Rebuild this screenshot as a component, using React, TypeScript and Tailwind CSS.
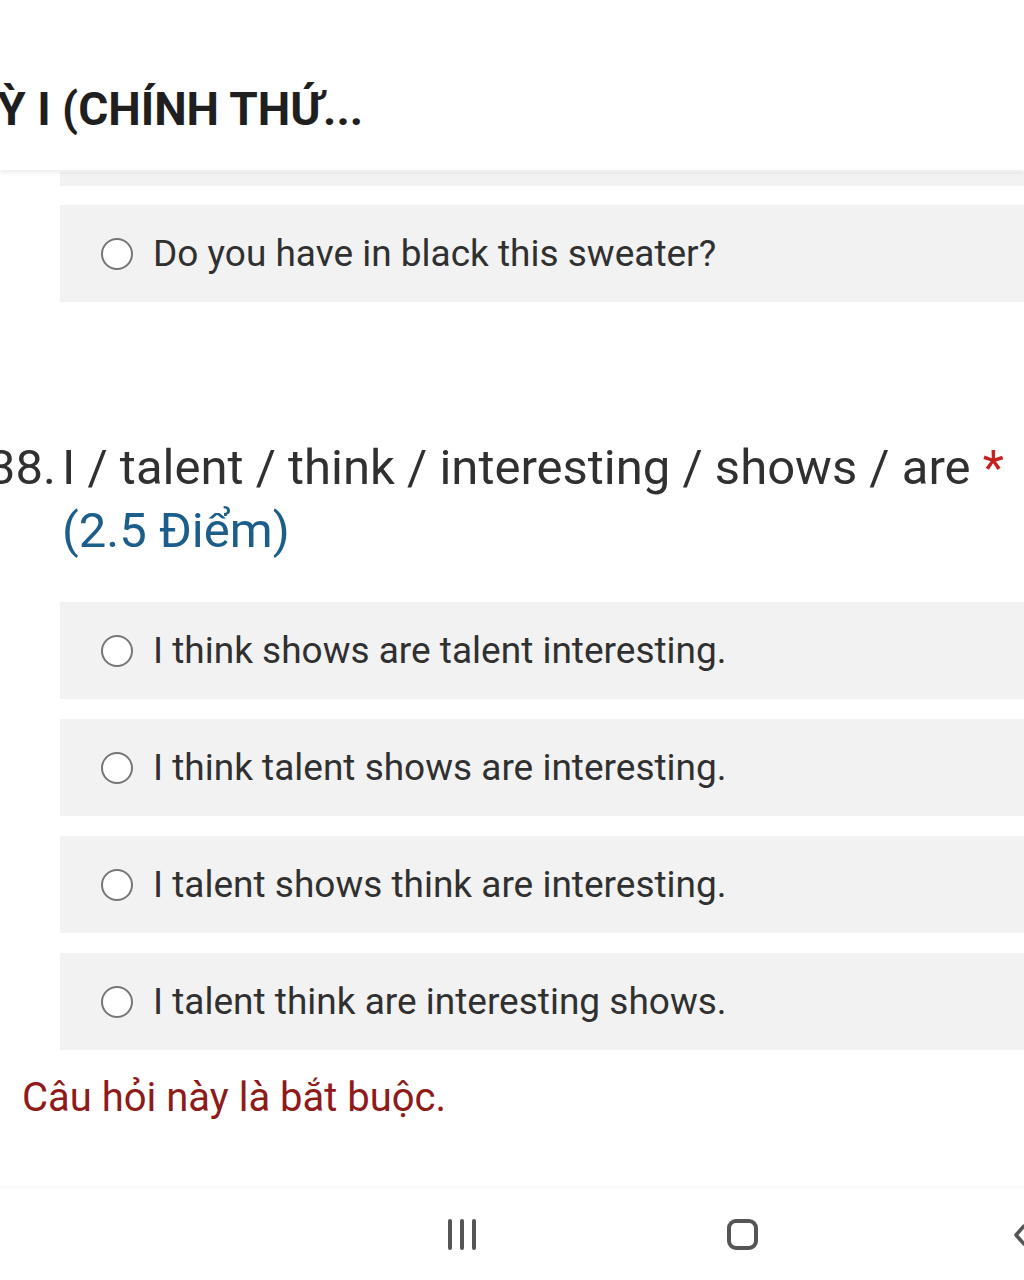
const options = [
  'I think shows are talent interesting.',
  'I think talent shows are interesting.',
  'I talent shows think are interesting.',
  'I talent think are interesting shows.',
];

function Radio() {
  return <span className="block w-[32px] h-[32px] rounded-full border-2 border-[#767676] bg-white shrink-0" />;
}

function Option({ label }: { label: string }) {
  return (
    <div className="ml-[60px] h-[97px] bg-[#f2f2f2] flex items-center pl-[41px] gap-[20px]">
      <Radio />
      <span className="text-[37px] text-[#303030] whitespace-nowrap">{label}</span>
    </div>
  );
}

export default function App() {
  return (
    <div
      className="w-[1024px] h-[1280px] bg-white overflow-hidden flex flex-col"
      style={{ fontFamily: 'Roboto, "Noto Sans", sans-serif' }}
    >
      {/* Header */}
      <div className="h-[170px] shrink-0 bg-white flex items-center relative z-10 shadow-[0_2px_5px_rgba(0,0,0,0.09)]">
        <h1 className="-ml-[32px] pt-[48px] text-[46px] font-bold text-[#1f1f1f] whitespace-nowrap">
          KỲ I (CHÍNH THỨ...
        </h1>
      </div>

      {/* Content */}
      <div className="flex flex-col">
        <div className="ml-[60px] h-[14px] mt-[2px] bg-[#f2f2f2]" />
        <div className="mt-[19px]">
          <Option label="Do you have in black this sweater?" />
        </div>

        <div className="mt-[134px] flex text-[49px] leading-[63px] text-[#303030]">
          <span className="w-[62px] -ml-[12px] shrink-0 text-right whitespace-nowrap">38.</span>
          <div className="flex flex-col pl-[12px]">
            <span className="whitespace-nowrap">
              I / talent / think / interesting / shows / are <span className="text-[#c5221f]">*</span>
            </span>
            <span className="text-[#1b5e8c]">(2.5 Điểm)</span>
          </div>
        </div>

        <div className="mt-[40px] flex flex-col gap-[20px]">
          {options.map((o) => (
            <Option key={o} label={o} />
          ))}
        </div>

        <p className="mt-[26px] ml-[22px] text-[40px] leading-[44px] text-[#8e1a1a]">Câu hỏi này là bắt buộc.</p>
      </div>

      {/* Nav bar */}
      <div className="mt-auto h-[95px] shrink-0 border-t-[4px] border-[#fafafa] bg-white flex items-center relative">
        <div className="absolute left-[448px] top-[30px] flex gap-[8px]">
          <span className="block w-[4px] h-[31px] rounded-full bg-[#555]" />
          <span className="block w-[4px] h-[31px] rounded-full bg-[#555]" />
          <span className="block w-[4px] h-[31px] rounded-full bg-[#555]" />
        </div>
        <div className="absolute left-[727px] top-[30px] w-[31px] h-[31px] rounded-[9px] border-[4px] border-[#555]" />
        <svg className="absolute left-[1012px] top-[34px]" width="16" height="24" viewBox="0 0 16 24">
          <path d="M12 3 L4 12 L12 21" fill="none" stroke="#555" strokeWidth="3.5" strokeLinecap="round" strokeLinejoin="round" />
        </svg>
      </div>
    </div>
  );
}
